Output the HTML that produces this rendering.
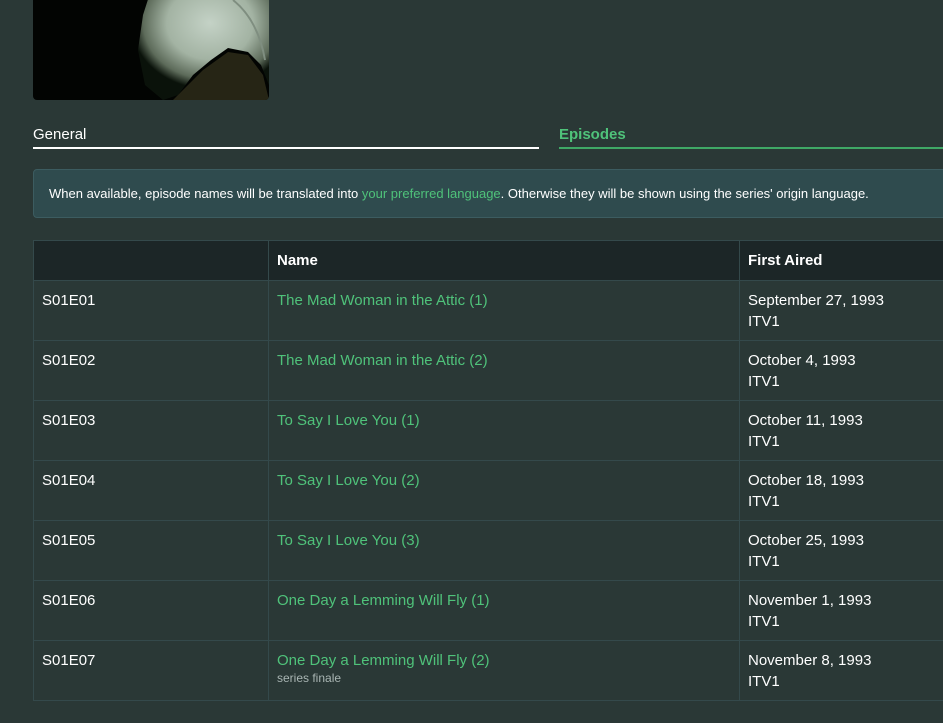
<!DOCTYPE html>
<html><head><meta charset="utf-8"><style>
html,body{margin:0;padding:0;background:#2a3836;width:943px;height:723px;overflow:hidden;font-family:"Liberation Sans",sans-serif;color:#fff}
.img{position:absolute;left:33px;top:-10px;width:236px;height:110px;border-radius:0 0 4px 4px;background:#020402;overflow:hidden}
.tab{position:absolute;top:126px;font-size:15px}
.alert{position:absolute;left:33px;top:169px;width:930px;height:49px;background:#2f4b4e;border:1px solid #3c5c60;border-radius:4px;font-size:13px;line-height:48px;box-sizing:border-box;padding-left:15px}
.g{color:#4fc27a}
table{position:absolute;left:33px;top:240px;border-collapse:collapse;font-size:15px;table-layout:fixed;width:1010px}
td,th{border:1px solid #34494b;vertical-align:top;text-align:left;padding:0 8px}
th{background:#1c2627;height:39px;vertical-align:middle;font-weight:bold}
td{height:60px;padding-top:9px;box-sizing:border-box;line-height:21px}
.s{color:#a9b5b3;font-size:12px;line-height:14px}
</style></head><body>
<div class="img"><svg width="236" height="110">
<defs><radialGradient id="h" cx="0.55" cy="0.3" r="0.6"><stop offset="0" stop-color="#c4d2c6"/><stop offset="0.55" stop-color="#a3b3a3"/><stop offset="0.85" stop-color="#5d6b5a"/><stop offset="1" stop-color="#0a120a"/></radialGradient></defs>
<path d="M118 0 L236 0 L236 95 L228 75 L215 62 L195 58 L178 70 L160 85 L145 105 L130 110 L112 95 L105 60 L110 25 Z" fill="url(#h)"/>
<path d="M140 110 L170 80 L195 62 L215 65 L230 85 L236 110 Z" fill="#262515"/>
<path d="M200 10 Q225 30 232 70" stroke="#7f8e80" stroke-width="2" fill="none"/>
</svg></div>
<div class="tab" style="left:33px">General</div>
<div style="position:absolute;left:33px;top:147px;width:506px;height:2px;background:#fff"></div>
<div class="tab g" style="left:559px;font-weight:bold">Episodes</div>
<div style="position:absolute;left:559px;top:147px;width:384px;height:2px;background:#3fa866"></div>
<div class="alert">When available, episode names will be translated into <span class="g">your preferred language</span>. Otherwise they will be shown using the series' origin language.</div>
<table>
<colgroup><col style="width:235px"><col style="width:471px"><col style="width:304px"></colgroup>
<tr><th></th><th>Name</th><th>First Aired</th></tr>
<tr><td>S01E01</td><td class="g">The Mad Woman in the Attic (1)</td><td>September 27, 1993<br>ITV1</td></tr>
<tr><td>S01E02</td><td class="g">The Mad Woman in the Attic (2)</td><td>October 4, 1993<br>ITV1</td></tr>
<tr><td>S01E03</td><td class="g">To Say I Love You (1)</td><td>October 11, 1993<br>ITV1</td></tr>
<tr><td>S01E04</td><td class="g">To Say I Love You (2)</td><td>October 18, 1993<br>ITV1</td></tr>
<tr><td>S01E05</td><td class="g">To Say I Love You (3)</td><td>October 25, 1993<br>ITV1</td></tr>
<tr><td>S01E06</td><td class="g">One Day a Lemming Will Fly (1)</td><td>November 1, 1993<br>ITV1</td></tr>
<tr><td>S01E07</td><td class="g">One Day a Lemming Will Fly (2)<div class="s">series finale</div></td><td>November 8, 1993<br>ITV1</td></tr>
</table>
</body></html>
